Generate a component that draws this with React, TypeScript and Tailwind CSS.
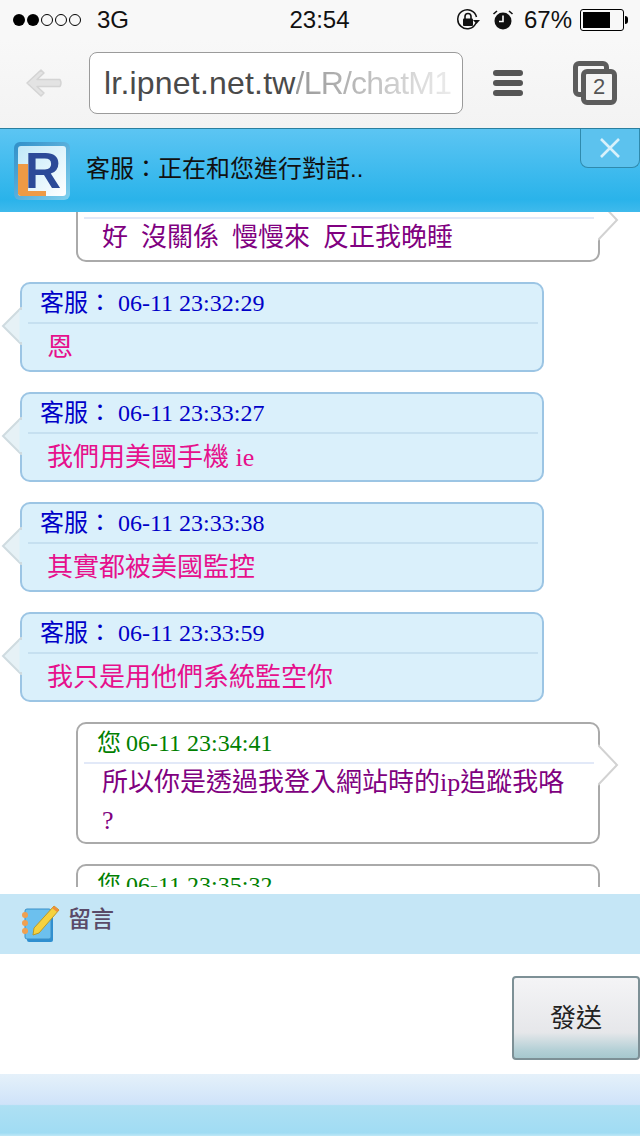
import React from "react"

const SANS = "font-['Liberation_Sans','Noto_Sans_CJK_TC',sans-serif]"

type Msg = {
  id: number
  from: "staff" | "me"
  time?: string
  text: string
  wrap?: string
  lead?: boolean
}

const messages: Msg[] = [
  { id: 1, from: "me", text: "好 沒關係 慢慢來 反正我晚睡", lead: true },
  { id: 2, from: "staff", time: "06-11 23:32:29", text: "恩" },
  { id: 3, from: "staff", time: "06-11 23:33:27", text: "我們用美國手機 ie" },
  { id: 4, from: "staff", time: "06-11 23:33:38", text: "其實都被美國監控" },
  { id: 5, from: "staff", time: "06-11 23:33:59", text: "我只是用他們系統監空你" },
  { id: 6, from: "me", time: "06-11 23:34:41", text: "所以你是透過我登入網站時的ip追蹤我咯", wrap: "?" },
  { id: 7, from: "me", time: "06-11 23:35:32", text: "" },
]

function LeftArrow() {
  return (
    <svg className="absolute left-[-21px] top-[23px]" width="21" height="38" viewBox="0 0 21 38">
      <path d="M20 1 L2 19 L20 37 Z" fill="#e6f1f6" stroke="#cfdbe0" strokeWidth="2" />
      <path d="M20 3 L20 35" stroke="#daf0fb" strokeWidth="3" />
    </svg>
  )
}

function RightArrow() {
  return (
    <svg className="absolute right-[-21px] top-[20px]" width="21" height="42" viewBox="0 0 21 42">
      <path d="M0 1 L19 21 L0 41" fill="#ffffff" stroke="#d2d2d2" strokeWidth="2" />
    </svg>
  )
}

function Bubble({ msg }: { msg: Msg }) {
  if (msg.from === "staff") {
    return (
      <div className="relative ml-5 mb-5 h-[90px] w-[524px] shrink-0 rounded-[10px] border-2 border-[#9cc5e4] bg-[#daf0fb]">
        <LeftArrow />
        <div className="ml-[6px] mr-1 flex h-[40px] items-center border-b-2 border-[#c6e0f0] pl-[12px] font-['Liberation_Serif','Noto_Sans_CJK_TC',serif] text-[24px] leading-none text-[#0000c8]">
          <span className="w-[78px]">客服：</span>
          <span>{msg.time}</span>
        </div>
        <p className="pl-[25px] pt-[8px] font-['Liberation_Serif','Noto_Sans_CJK_TC',serif] text-[26px] leading-[32px] text-[#e6108c]">{msg.text}</p>
      </div>
    )
  }
  return (
    <div className={`relative ml-[76px] mb-5 w-[524px] shrink-0 rounded-[10px] border-2 border-[#aaaaaa] bg-white ${msg.lead ? "-mt-[35px] h-[85px]" : "h-[122px]"}`}>
      {msg.text && <RightArrow />}
      <div className="ml-[6px] mr-1 flex h-[40px] items-center border-b-2 border-[#e2e9f8] pl-[13px] font-['Liberation_Serif','Noto_Sans_CJK_TC',serif] text-[24px] leading-none text-[#008000]">
        {msg.time && <span className="mr-[5px]">您</span>}
        {msg.time && <span>{msg.time}</span>}
      </div>
      <div className="pl-[24px] font-['Liberation_Serif','Noto_Sans_CJK_TC',serif] text-[26px] leading-[38px] text-[#800080]">
        <p className="whitespace-pre">{msg.text.replace(/ /g, "  ")}</p>
        {msg.wrap && <p>{msg.wrap}</p>}
      </div>
    </div>
  )
}

function StatusBar() {
  return (
    <div className={`flex h-10 items-center justify-between bg-[#f8f8f8] pl-[13px] pr-[12px] text-[24px] text-[#111] ${SANS}`}>
      <div className="flex w-[200px] items-center">
        <div className="flex gap-[2px]">
          <span className="h-[12px] w-[12px] rounded-full bg-black" />
          <span className="h-[12px] w-[12px] rounded-full bg-black" />
          <span className="h-[12px] w-[12px] rounded-full border border-black" />
          <span className="h-[12px] w-[12px] rounded-full border border-black" />
          <span className="h-[12px] w-[12px] rounded-full border border-black" />
        </div>
        <span className="ml-[16px]">3G</span>
      </div>
      <span className="mr-[30px]">23:54</span>
      <div className="flex items-center">
        <svg width="24" height="24" viewBox="0 0 24 24" className="mr-[12px]" fill="none">
          <path d="M20 15 A9.5 9.5 0 1 1 20.5 9" stroke="#111" strokeWidth="1.5" />
          <path d="M17 12 L24 12 L20.5 16 Z" fill="#111" />
          <rect x="7" y="10.5" width="10" height="7.5" rx="1" fill="#111" />
          <path d="M9 11 V8.5 A3 3 0 0 1 15 8.5 V11" stroke="#111" strokeWidth="1.6" />
        </svg>
        <svg width="22" height="22" viewBox="0 0 22 22" className="mr-[10px]" fill="none">
          <circle cx="11" cy="12" r="8.5" fill="#111" />
          <path d="M11 6.5 V12.5 H7" stroke="#fff" strokeWidth="1.6" />
          <path d="M1.5 5 L5 2 M20.5 5 L17 2" stroke="#111" strokeWidth="1.6" />
        </svg>
        <span className="mr-[8px]">67%</span>
        <div className="flex items-center">
          <div className="h-[22px] w-[44px] rounded-[3px] border border-black p-[2px]">
            <div className="h-full w-[27px] bg-black" />
          </div>
          <div className="ml-[1px] h-[8px] w-[3px] rounded-r-sm bg-black" />
        </div>
      </div>
    </div>
  )
}

function Toolbar() {
  return (
    <div className={`flex h-[88px] items-center bg-gradient-to-b from-[#f8f8f8] to-[#f3f3f3] pb-[3px] ${SANS}`}>
      <svg width="38" height="30" viewBox="0 0 38 30" className="ml-[25px]" fill="#e3e3e3" stroke="#d4d4d4" strokeWidth="1.5" strokeLinejoin="round">
        <path d="M16 2 L2 15 L16 28 L19 25 L12 18.5 H35 Q37 15 35 11.5 H12 L19 5 Z" />
      </svg>
      <div className="ml-[26px] flex h-[62px] w-[374px] items-center rounded-[8px] border border-[#9b9b9b] bg-white pl-[14px] text-[32px] whitespace-nowrap">
        <span className="tracking-[0.2px] text-[#4a4a4a]">lr.ipnet.net.tw</span>
        <span className="bg-gradient-to-r from-[#9a9a9a] to-[#ececec] bg-clip-text tracking-[-0.8px] text-transparent">/LR/chatM1</span>
      </div>
      <div className="ml-[30px] flex w-[30px] flex-col gap-[4px]">
        <span className="h-[6px] rounded-full bg-[#555]" />
        <span className="h-[6px] rounded-full bg-[#555]" />
        <span className="h-[6px] rounded-full bg-[#555]" />
      </div>
      <div className="relative ml-[50px] h-[44px] w-[44px]">
        <div className="h-[36px] w-[36px] rounded-[6px] border-[5px] border-[#5c5c5c]" />
        <div className="absolute bottom-0 right-0 flex h-[36px] w-[36px] items-center justify-center rounded-[6px] border-[5px] border-[#5c5c5c] bg-[#f5f5f5] text-[22px] leading-none text-[#555]">2</div>
      </div>
    </div>
  )
}

function Logo() {
  return (
    <div className="flex h-[58px] w-[56px] items-center justify-center rounded-[6px] bg-gradient-to-br from-[#2f8fc8] to-[#7fd0ee] p-[4px]">
      <div className="relative flex h-full w-full items-center justify-center overflow-hidden rounded-[3px] bg-gradient-to-br from-[#bfe8f8] to-white">
        <div className="absolute bottom-[2px] left-0 h-[30px] w-[10px] bg-[#ee9a45]" />
        <div className="absolute bottom-0 left-0 h-[5px] w-[28px] bg-[#ee9a45]" />
        <span className="relative ml-[2px] font-['Liberation_Sans',sans-serif] text-[50px] font-bold leading-none text-[#2c4a98]">R</span>
      </div>
    </div>
  )
}

function Header() {
  return (
    <div className={`relative flex h-[84px] items-center border-t border-[#2a7f9f] bg-[linear-gradient(#5cc5f3,#2ab3ea_85%,#3fbaec)] pl-[14px] ${SANS}`}>
      <Logo />
      <span className="ml-[16px] pb-1 text-[24px] text-[#111]">客服：正在和您進行對話..</span>
      <div className="absolute right-0 top-0 flex h-[39px] w-[60px] items-center justify-center rounded-b-[8px] border-x border-b border-[#2f8aad] bg-[#5cc2ee]">
        <svg width="22" height="22" viewBox="0 0 22 22" stroke="#d8f1fb" strokeWidth="2.6">
          <path d="M2 2 L20 20 M20 2 L2 20" />
        </svg>
      </div>
    </div>
  )
}

function NoteIcon() {
  return (
    <svg width="40" height="40" viewBox="0 0 40 40">
      <rect x="6" y="7" width="26" height="31" rx="2" fill="#2f8fd0" />
      <rect x="4" y="5" width="26" height="30" rx="2" fill="#6cc0ee" stroke="#3a90c8" />
      <circle cx="4" cy="11" r="3" fill="#f0a050" />
      <circle cx="4" cy="19" r="3" fill="#f0a050" />
      <circle cx="4" cy="27" r="3" fill="#f0a050" />
      <path d="M13 24 L33 2 L38 6 L18 29 L12 31 Z" fill="#f6d23e" stroke="#b99a2a" />
      <path d="M33 2 L38 6 L36 8 L31 4 Z" fill="#ef8f3c" />
    </svg>
  )
}

export default function App() {
  return (
    <div className="flex h-[1136px] w-[640px] flex-col overflow-hidden bg-white">
      <StatusBar />
      <Toolbar />
      <Header />

      {/* chat log, clipped at both ends */}
      <div className="flex h-[675px] flex-col overflow-hidden">
        {messages.map(m => <Bubble key={m.id} msg={m} />)}
      </div>
      <div className="h-[7px]" />

      <div className={`flex h-[60px] items-center bg-[#c5e6f6] pl-[21px] ${SANS}`}>
        <NoteIcon />
        <span className="ml-[7px] pb-[10px] text-[23px] font-medium text-[#5a4a68]">留言</span>
      </div>

      <div className="flex h-[120px] justify-end pt-[22px]">
        <button className={`flex h-[84px] w-[128px] items-center justify-center rounded-[4px] border-2 border-[#7d9096] bg-[linear-gradient(#f4f4f6,#e6e7ea_68%,#b4d0d6_90%,#a6c8ce)] text-[26px] text-[#222] ${SANS}`}>
          發送
        </button>
      </div>

      <div className="h-[62px] bg-[linear-gradient(#e5f1fa,#cfe3f9_49%,#aee0f3_51%,#a0dcf3_95%,#bfe8f7)]" />
    </div>
  )
}
